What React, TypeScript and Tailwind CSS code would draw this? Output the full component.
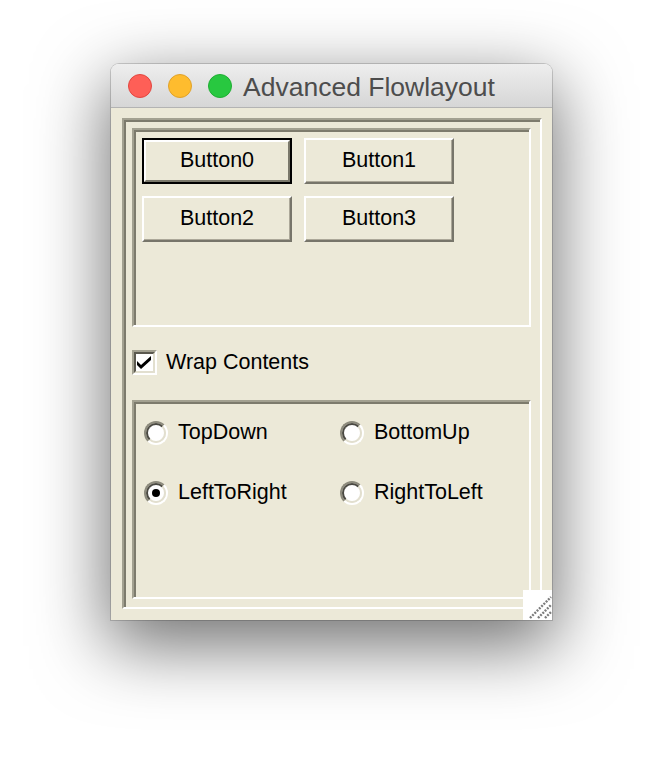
import React from "react";

function Radio({ checked }: { checked?: boolean }) {
  return (
    <span className="flex h-6 w-6 shrink-0 rounded-full border-2 border-t-[#8d8b7d] border-l-[#8d8b7d] border-b-white border-r-white">
      <span className="flex flex-1 items-center justify-center rounded-full border-2 border-t-[#4a4942] border-l-[#4a4942] border-b-[#e2dfcf] border-r-[#e2dfcf] bg-white">
        {checked && <span className="h-[8px] w-[8px] rounded-full bg-black" />}
      </span>
    </span>
  );
}

function RadioItem({ label, checked }: { label: string; checked?: boolean }) {
  return (
    <div className="flex h-6 items-center">
      <Radio checked={checked} />
      <span className="ml-[10px] leading-none">{label}</span>
    </div>
  );
}

function Button({ label, focused }: { label: string; focused?: boolean }) {
  if (focused) {
    return (
      <div className="flex h-[46px] w-[150px] border-2 border-black">
        <div className="flex flex-1 items-center justify-center border-2 border-t-white border-l-white border-b-[#7a786b] border-r-[#7a786b] bg-[#ece9d8] leading-none">
          {label}
        </div>
      </div>
    );
  }
  return (
    <div className="flex h-[46px] w-[150px] items-center justify-center border-2 border-t-white border-l-white border-b-[#77756a] border-r-[#77756a] bg-[#ece9d8] shadow-[inset_-1px_-1px_0_#aca899] leading-none">
      {label}
    </div>
  );
}

const etched =
  "border-t-2 border-l-2 border-r-2 border-b-2 border-t-[#a3a191] border-l-[#a3a191] border-r-white border-b-white shadow-[inset_2px_2px_0_#7d7b6d]";

export default function App() {
  return (
    <div className="min-h-[780px] w-[664px] bg-white pt-[64px] pl-[111px] font-['Liberation_Sans',Arial,sans-serif]">
      <div className="relative w-[441px] rounded-t-[8px] shadow-[0_22px_70px_4px_rgba(0,0,0,0.56),0_0_0_1px_rgba(0,0,0,0.16)]">
        <div className="flex h-[44px] items-center rounded-t-[8px] border-b border-[#b3b3b3] bg-gradient-to-b from-[#eeeeee] to-[#d6d6d6] pl-[17px]">
          <span className="h-6 w-6 rounded-full border border-[#e2463f] bg-[#fe5f57]" />
          <span className="ml-4 h-6 w-6 rounded-full border border-[#e0a22a] bg-[#febc2e]" />
          <span className="ml-4 h-6 w-6 rounded-full border border-[#1fae33] bg-[#28c840]" />
          <span className="ml-[11px] mt-[3px] text-[26.5px] leading-none text-[#4d4d4d]">Advanced Flowlayout</span>
        </div>
        <div className="bg-[#ece9d8] pt-[10px] pl-[11px] pr-[10px] pb-[11px] text-[21.5px] text-black">
          <div className={`${etched} pt-[8px] pl-[8px] pr-[9px] pb-[8px]`}>
            <div className={`${etched} h-[199px] pt-[8px] pl-[8px]`}>
              <div className="flex w-[389px] flex-wrap gap-[12px]">
                <Button label="Button0" focused />
                <Button label="Button1" />
                <Button label="Button2" />
                <Button label="Button3" />
              </div>
            </div>
            <div className="mt-[23px] mb-[25px] flex h-[25px] items-center">
              <span className="flex h-[25px] w-[25px] border-2 border-t-[#a3a191] border-l-[#a3a191] border-b-white border-r-white">
                <span className="flex flex-1 items-center justify-center border-2 border-t-[#5b594f] border-l-[#5b594f] border-b-[#e2dfcf] border-r-[#e2dfcf] bg-white">
                  <svg width="15" height="13" viewBox="0 0 15 13">
                    <polygon points="0,5 4,9 14,0 14,4 4,13 0,9" fill="#000" />
                  </svg>
                </span>
              </span>
              <span className="ml-[9px] leading-none">Wrap Contents</span>
            </div>
            <div className={`${etched} h-[199px] pt-[19px] pl-[10px]`}>
              <div className="grid grid-cols-[196px_1fr] gap-y-[36px]">
                <RadioItem label="TopDown" />
                <RadioItem label="BottomUp" />
                <RadioItem label="LeftToRight" checked />
                <RadioItem label="RightToLeft" />
              </div>
            </div>
          </div>
        </div>
        <div className="absolute right-0 bottom-0 h-[30px] w-[29px] bg-white">
          <svg width="29" height="30" viewBox="0 0 29 30">
            <g stroke="#7c7c7c" strokeWidth="2.4" strokeDasharray="2 1.2">
              <line x1="7" y1="28" x2="28" y2="7" />
              <line x1="15" y1="28" x2="28" y2="15" />
              <line x1="22" y1="28" x2="28" y2="22" />
            </g>
          </svg>
        </div>
      </div>
    </div>
  );
}
